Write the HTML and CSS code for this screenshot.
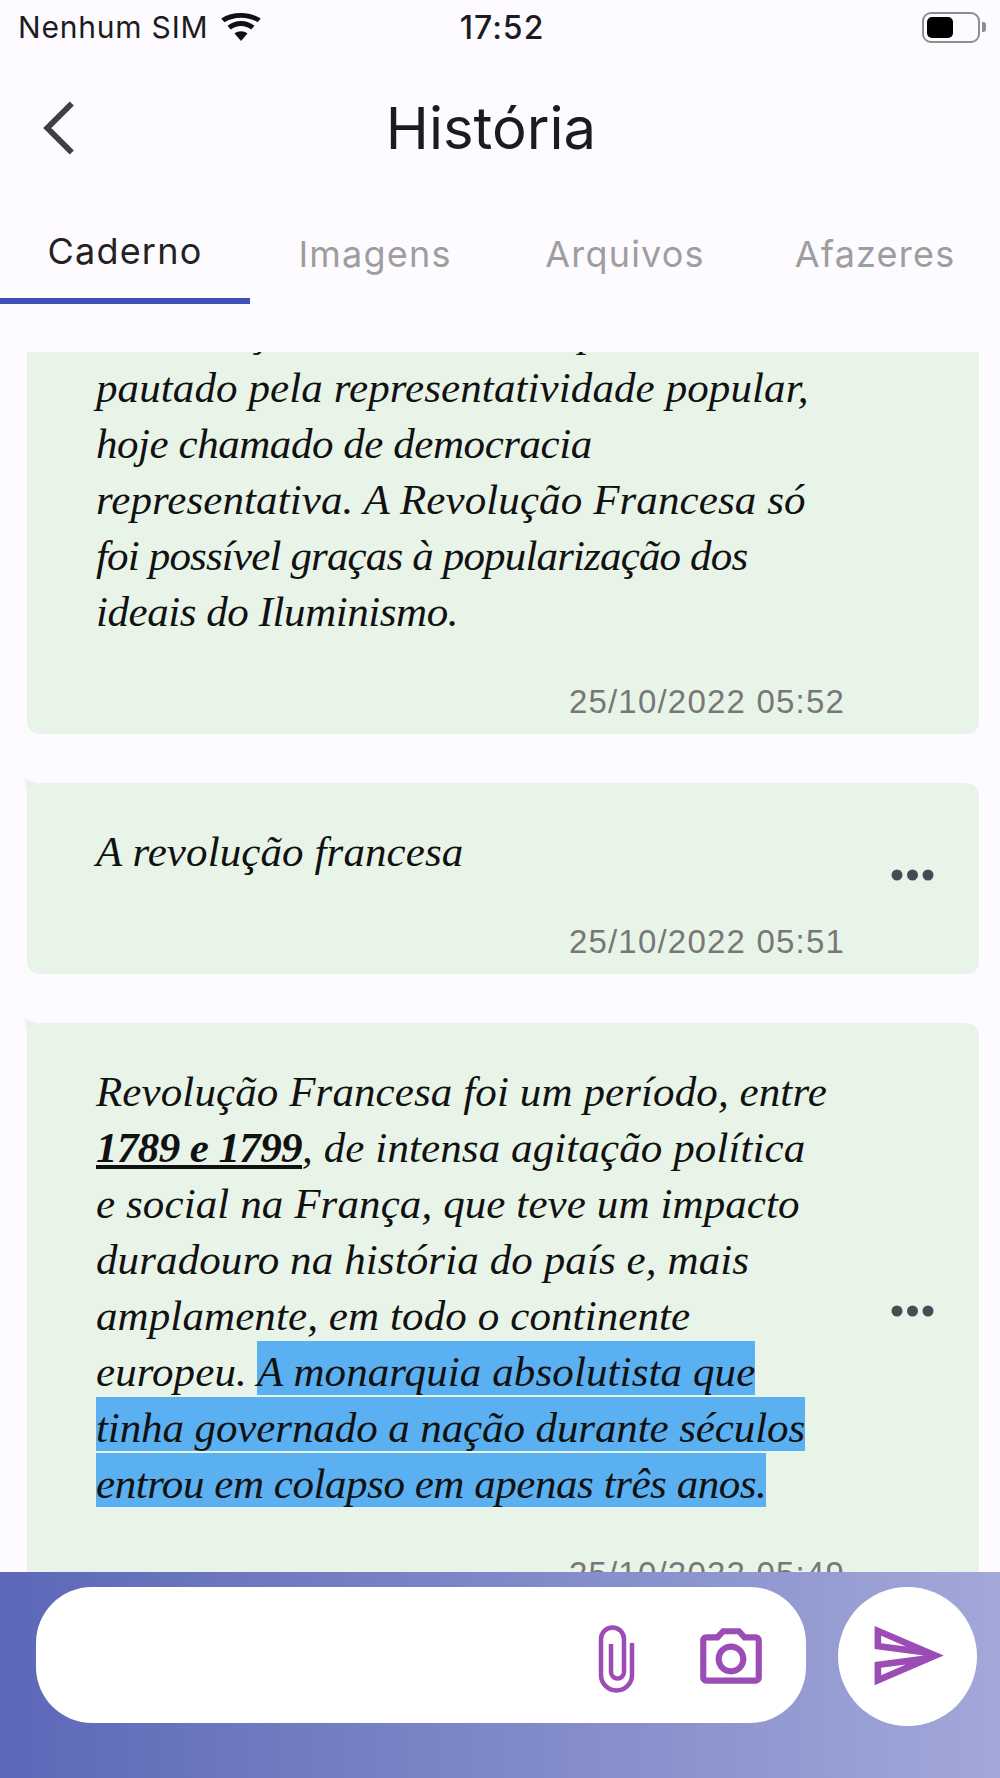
FILE: index.html
```html
<!DOCTYPE html>
<html lang="pt-BR">
<head>
    <meta charset="UTF-8">
    <meta name="viewport" content="width=device-width, initial-scale=1.0">
    <title>História</title>
    <link rel="stylesheet" href="styles.css">
</head>
<body>
    <div class="status-bar">
        <div class="status-left">
            <span>Nenhum SIM</span>
            <svg class="wifi" viewBox="0 0 40 28">
                <path d="M20 28l-6.500-7.500c3.600-3 9.400-3 13 0z"/>
                <path d="M9.800 16.500l-3.300-3.800c7.600-6.400 19.400-6.400 27 0l-3.300 3.800c-5.700-4.700-14.700-4.700-20.400 0z"/>
                <path d="M3.500 9.200l-3.300-3.700c11-7.300 28.600-7.300 39.600 0l-3.300 3.700c-9.500-6-23.500-6-33 0z"/>
            </svg>
        </div>
        <span class="status-time">17:52</span>
        <div class="battery">
            <div class="battery-body"><div class="battery-fill"></div></div>
            <div class="battery-tip"></div>
        </div>
    </div>

    <header class="app-bar">
        <svg class="back" viewBox="0 0 30 50">
            <path d="M27 2L4 25l23 23"/>
        </svg>
        <h1>História</h1>
    </header>

    <nav class="tabs">
        <a class="tab tab-active">Caderno</a>
        <a class="tab">Imagens</a>
        <a class="tab">Arquivos</a>
        <a class="tab">Afazeres</a>
    </nav>

    <main class="note-list">
        <div class="note-scroll">
            <article class="note">
                <div class="note-body">
                    <p class="note-text">e na criação de um sistema político<br>
                    pautado pela representatividade popular,<br>
                    <span class="tight">hoje chamado de democracia</span><br>
                    representativa. A Revolução Francesa só<br>
                    <span class="tighter">foi possível graças à popularização dos</span><br>
                    <span class="tight">ideais do Iluminismo.</span></p>
                    <div class="note-date">25/10/2022 05:52</div>
                </div>
                <div class="note-spacer"></div>
            </article>

            <article class="note">
                <div class="note-body">
                    <p class="note-text">A revolução francesa</p>
                    <div class="note-date">25/10/2022 05:51</div>
                </div>
                <svg class="note-more" viewBox="0 0 43 12">
                    <circle cx="6" cy="6" r="5.500"/>
                    <circle cx="21.500" cy="6" r="5.500"/>
                    <circle cx="37" cy="6" r="5.500"/>
                </svg>
            </article>

            <article class="note">
                <div class="note-body">
                    <p class="note-text">Revolução Francesa foi um período, entre<br>
                    <strong>1789 e 1799</strong>, de intensa agitação política<br>
                    e social na França, que teve um impacto<br>
                    duradouro na história do país e, mais<br>
                    amplamente, em todo o continente<br>
                    europeu. <mark>A monarquia absolutista que<br>
                    <span class="snug">tinha governado a nação durante séculos</span><br>
                    <span class="tight">entrou em colapso em apenas três anos.</span></mark></p>
                    <div class="note-date">25/10/2022 05:49</div>
                </div>
                <svg class="note-more" viewBox="0 0 43 12">
                    <circle cx="6" cy="6" r="5.500"/>
                    <circle cx="21.500" cy="6" r="5.500"/>
                    <circle cx="37" cy="6" r="5.500"/>
                </svg>
            </article>
        </div>
    </main>

    <footer class="composer">
        <div class="composer-input">
            <svg class="icon-clip" viewBox="0 0 38 74">
                <path d="M13 22v28a6.500 6.500 0 0 0 13 0V17a11.500 11.500 0 0 0-23 0v36a15.500 15.500 0 0 0 31 0V21"/>
            </svg>
            <svg class="icon-camera" viewBox="0 0 24 24">
                <path d="M20 4h-3.170L15 2H9L7.170 4H4c-1.100 0-2 .9-2 2v12c0 1.100.9 2 2 2h16c1.100 0 2-.9 2-2V6c0-1.100-.9-2-2-2zm0 14H4V6h4.050l1.830-2h4.240l1.830 2H20v12zM12 7c-2.760 0-5 2.240-5 5s2.240 5 5 5 5-2.240 5-5-2.240-5-5-5zm0 8c-1.650 0-3-1.350-3-3s1.350-3 3-3 3 1.350 3 3-1.350 3-3 3z"/>
            </svg>
        </div>
        <button class="composer-send">
            <svg viewBox="0 0 24 24">
                <path d="M4.010 6.030l7.510 3.220-7.520-1 .01-2.220m7.500 8.720L4 17.970v-2.220l7.510-1M2.010 3L2 10l15 2-15 2 .01 7L23 12 2.010 3z"/>
            </svg>
        </button>
    </footer>
</body>
</html>
```

FILE: styles.css
```css
* {
    box-sizing: border-box;
}

body {
    margin: 0;
    height: 1778px;
    display: flex;
    flex-direction: column;
    overflow: hidden;
    background-color: #fdfbff;
    font-family: Inter, Roboto, sans-serif;
    color: #1c1c20;
}

/* status bar */
.status-bar {
    height: 54px;
    padding: 0 14px 0 18px;
    display: grid;
    grid-template-columns: 1fr auto 1fr;
    align-items: center;
    font-size: 30px;
}

.status-left {
    display: flex;
    align-items: center;
    gap: 13px;
    letter-spacing: 0.800px;
}

.wifi {
    width: 40px;
    height: 28px;
    fill: #111;
}

.status-time {
    font-size: 32px;
    font-weight: 500;
    letter-spacing: 1px;
}

.battery {
    justify-self: end;
    display: flex;
    align-items: center;
    gap: 2px;
}

.battery-body {
    width: 58px;
    height: 31px;
    padding: 3px;
    border: 2px solid #8e8e8e;
    border-radius: 9px;
}

.battery-fill {
    width: 26px;
    height: 100%;
    background-color: #000;
    border-radius: 5px;
}

.battery-tip {
    width: 4px;
    height: 10px;
    background-color: #8e8e8e;
    border-radius: 0 3px 3px 0;
}

/* app bar */
.app-bar {
    height: 148px;
    padding-left: 43px;
    display: flex;
    align-items: center;
    position: relative;
}

.back {
    width: 32px;
    height: 54px;
    fill: none;
    stroke: #3e4048;
    stroke-width: 5.500;
}

.app-bar h1 {
    margin: 0;
    position: absolute;
    left: 0;
    right: 18px;
    text-align: center;
    font-size: 58px;
    font-weight: 400;
}

/* tabs */
.tabs {
    height: 102px;
    display: grid;
    grid-template-columns: repeat(4, 250px);
}

.tab {
    padding-top: 30px;
    text-align: center;
    font-size: 36px;
    letter-spacing: 1.200px;
    color: #9e9e9e;
}

.tab-active {
    padding-top: 27px;
    color: #222;
    border-bottom: 6px solid #3f51b5;
}

/* notes */
.note-list {
    flex: 1;
    min-height: 0;
    margin-top: 48px;
    overflow: hidden;
}

.note-scroll {
    margin-top: -89px;
    padding: 0 21px 0 27px;
    display: flex;
    flex-direction: column;
    gap: 49px;
}

.note {
    position: relative;
    padding: 41px 45px 12px 69px;
    display: flex;
    align-items: center;
    background-color: #e9f4e9;
    border-radius: 0 12px 12px 12px;
}

.note::before {
    content: "";
    position: absolute;
    left: -3px;
    top: -5px;
    width: 12px;
    height: 12px;
    background-color: #e9f4e9;
    clip-path: polygon(0 0, 100% 42%, 100% 100%, 25% 100%);
}

.note-body {
    width: 749px;
    flex-shrink: 0;
}

.note-text {
    margin: 0;
    font-family: "Liberation Serif", serif;
    font-style: italic;
    font-size: 43px;
    line-height: 56px;
    letter-spacing: 0.100px;
    white-space: nowrap;
    color: #111;
}

.note-text strong {
    letter-spacing: -0.600px;
    text-decoration: underline;
}

.note-text .snug {
    letter-spacing: -0.100px;
}

.note-text .tight {
    letter-spacing: -0.450px;
}

.note-text .tighter {
    letter-spacing: -0.850px;
}

.note-text mark {
    padding: 7.300px 0 0;
    color: #111;
    background-color: #5ab0f0;
    -webkit-box-decoration-break: clone;
    box-decoration-break: clone;
}

.note-date {
    margin-top: 42px;
    height: 40px;
    line-height: 40px;
    text-align: right;
    font-family: "Liberation Sans", Arial, sans-serif;
    font-size: 33px;
    letter-spacing: 1.200px;
    color: #777;
}

.note-spacer {
    width: 43px;
}

.note-more {
    width: 43px;
    height: 12px;
    margin: 0 0 36px 46px;
    fill: #4a4a55;
}

/* composer */
.composer {
    height: 206px;
    padding: 15px 23px 0 36px;
    display: flex;
    align-items: flex-start;
    gap: 32px;
    background: linear-gradient(to right, #5c68b8, #a2a8d8);
}

.composer-input {
    width: 770px;
    height: 136px;
    padding: 8px 38px 0 0;
    display: flex;
    align-items: center;
    justify-content: flex-end;
    gap: 58px;
    background-color: #fff;
    border-radius: 56px;
}

.icon-clip {
    width: 38px;
    height: 74px;
    fill: none;
    stroke: #9c4db5;
    stroke-width: 4.500;
}

.icon-camera {
    width: 74px;
    height: 74px;
    fill: #9c4db5;
}

.composer-send {
    width: 139px;
    height: 139px;
    padding: 0 0 3px;
    border: none;
    border-radius: 50%;
    background-color: #fff;
    display: flex;
    align-items: center;
    justify-content: center;
}

.composer-send svg {
    width: 79px;
    height: 79px;
    fill: #9c4db5;
}
```
